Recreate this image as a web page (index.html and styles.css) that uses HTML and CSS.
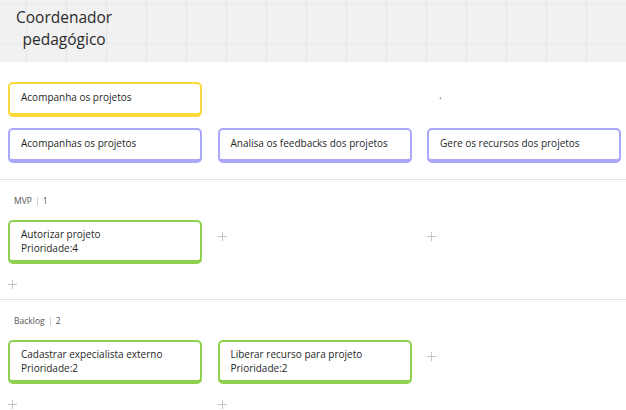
FILE: index.html
```html
<!DOCTYPE html>
<html lang="pt">
<head>
<meta charset="utf-8">
<title>Coordenador pedagógico</title>
<link rel="stylesheet" href="styles.css">
</head>
<body>
<header class="head">
  <h1 class="title">Coordenador<br>pedagógico</h1>
</header>
<main class="board">
  <section class="top">
    <div class="card card-yellow">Acompanha os projetos</div>
    <div class="empty"></div>
    <div class="dot">.</div>
    <div class="card card-purple">Acompanhas os projetos</div>
    <div class="card card-purple">Analisa os feedbacks dos projetos</div>
    <div class="card card-purple">Gere os recursos dos projetos</div>
  </section>

  <section class="lane">
    <div class="lane-head"><span>MVP</span><span class="sep"></span><span>1</span></div>
    <div class="lane-grid">
      <div class="col">
        <div class="card card-green tall">Autorizar projeto<br>Prioridade:4</div>
        <span class="add add-below"></span>
      </div>
      <div class="col"><span class="add add-top"></span></div>
      <div class="col"><span class="add add-top"></span></div>
    </div>
  </section>

  <section class="lane">
    <div class="lane-head"><span>Backlog</span><span class="sep"></span><span>2</span></div>
    <div class="lane-grid">
      <div class="col">
        <div class="card card-green tall">Cadastrar expecialista externo<br>Prioridade:2</div>
        <span class="add add-below"></span>
      </div>
      <div class="col">
        <div class="card card-green tall">Liberar recurso para projeto<br>Prioridade:2</div>
        <span class="add add-below"></span>
      </div>
      <div class="col"><span class="add add-top"></span></div>
    </div>
  </section>
</main>
</body>
</html>
```
FILE: styles.css
```css
* { box-sizing: border-box; }
html, body { margin: 0; padding: 0; background: #fff; }
body {
  font-family: "Open Sans", "Noto Sans", sans-serif;
  color: #222;
  width: 626px;
  height: 410px;
  overflow: hidden;
}
.head {
  height: 62px;
  background-color: #f1f1f1;
  background-image:
    linear-gradient(to right, #e6e6e6 1px, transparent 1px),
    linear-gradient(to bottom, #e8e8e8 1px, transparent 1px);
  background-size: 40px 40px, 40px 40px;
  background-position: 26px 0, 0 3px;
  padding: 6px 0 0 16px;
}
.title {
  display: inline-block;
  margin: 0;
  font-weight: 400;
  font-size: 15.5px;
  line-height: 22px;
  text-align: center;
  color: #2b2b2b;
}
.board { padding-top: 20px; }
.top {
  display: grid;
  grid-template-columns: repeat(3, 194px);
  grid-auto-rows: 35px;
  column-gap: 15.5px;
  row-gap: 11px;
  padding: 0 0 16px 8px;
  border-bottom: 1px solid #e3e3e3;
}
.card {
  width: 194px;
  background: #fff;
  border: 2px solid;
  border-bottom-width: 4px;
  border-radius: 5px;
  font-size: 10px;
  line-height: 14px;
  padding: 6px 8px 0 11px;
  color: #1f1f1f;
  white-space: nowrap;
}
.card-yellow { border-color: #fdd93c; }
.card-purple { border-color: #aba7fb; }
.card-green { border-color: #8fd14f; }
.card.tall { height: 44px; padding-top: 5px; }
.dot {
  font-size: 10px;
  line-height: 14px;
  padding: 6px 0 0 12px;
  color: #444;
}
.lane {
  padding: 15px 0 10px 0;
  border-bottom: 1px solid #e3e3e3;
}
.lane:last-child { border-bottom: none; }
.lane-head {
  display: flex;
  align-items: center;
  gap: 4px;
  padding-left: 14px;
  font-size: 8.5px;
  line-height: 12px;
  color: #555;
  margin-bottom: 13px;
}
.sep {
  width: 1px;
  height: 9px;
  background: #cfcfcf;
  margin: 0 1px;
}
.lane-grid {
  display: grid;
  grid-template-columns: repeat(3, 194px);
  column-gap: 15.5px;
  padding-left: 8px;
  align-items: start;
}
.col { display: flex; flex-direction: column; align-items: flex-start; }
.add {
  position: relative;
  display: block;
  width: 9px;
  height: 9px;
}
.add::before, .add::after {
  content: "";
  position: absolute;
  background: #c4c4c4;
}
.add::before { left: 4px; top: 0; width: 1px; height: 9px; }
.add::after { top: 4px; left: 0; width: 9px; height: 1px; }
.add-below { margin-top: 16px; }
.add-top { margin-top: 12px; }
```
